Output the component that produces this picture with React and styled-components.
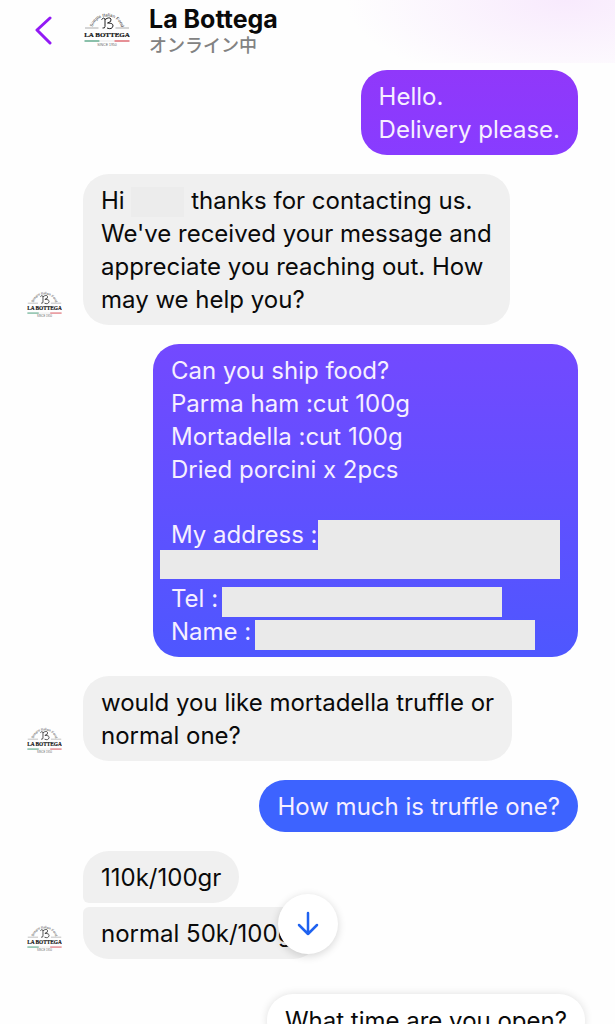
import React, { useId } from "react";
import styled, { createGlobalStyle } from "styled-components";

const GlobalStyle = createGlobalStyle`
  *, *::before, *::after { box-sizing: border-box; }
  body {
    margin: 0;
    background: #fefefe;
    color: #0a0a0a;
    font-family: Inter, "Noto Sans CJK JP", sans-serif;
  }
  button { font: inherit; color: inherit; border: 0; cursor: pointer; }
`;

const Screen = styled.div`
  position: relative;
  display: flex;
  flex-direction: column;
  height: 100vh;
  overflow: hidden;
`;

const Header = styled.header`
  display: flex;
  flex-shrink: 0;
  align-items: flex-start;
  height: 63px;
  padding: 5px 28px 0;
  background: radial-gradient(ellipse 220px 90px at 92% 0, #f8eafd, #fefefe);
`;

const BackButton = styled.button`
  display: flex;
  align-items: center;
  justify-content: center;
  width: 30px;
  height: 50px;
  margin-right: 26px;
  padding: 0;
  background: none;
`;

const HeaderLogo = styled.div`
  width: 46px;
  margin: 7px 19px 0 0;
`;

const Title = styled.h1`
  margin: 0;
  font-size: 25px;
  line-height: 29px;
  font-weight: 700;
`;

const Status = styled.p`
  margin: 0;
  color: #828282;
  font-size: 18px;
  font-weight: 500;
  line-height: 24px;
`;

const Thread = styled.main`
  display: flex;
  flex: 1;
  flex-direction: column;
  gap: 19px;
  min-height: 0;
  padding: 7px 37px 0 27px;
`;

const Row = styled.div`
  display: flex;
  flex-shrink: 0;
  align-items: flex-end;
  justify-content: ${(p) => (p.$sent ? "flex-end" : "flex-start")};
  gap: 21px;
`;

const Avatar = styled.div`
  width: 35px;
  margin-bottom: 7px;
`;

const Stack = styled.div`
  display: flex;
  flex-direction: column;
  align-items: flex-start;
  gap: 4px;
`;

const corners = {
  single: "26px",
  first: "26px 26px 26px 6px",
  last: "6px 26px 26px 26px",
};

const Bubble = styled.div`
  padding: 10px 18px 9px;
  border-radius: ${(p) => corners[p.$place || "single"]};
  background: ${(p) => p.$fill || "#f0f0f0"};
  color: ${(p) => (p.$fill ? "#f6efff" : "#0a0a0a")};
  font-size: 24px;
  line-height: 33px;
  white-space: pre-line;
`;

const OrderBubble = styled(Bubble)`
  width: 425px;
  max-width: 100%;
`;

const NameMask = styled.span`
  display: inline-block;
  width: 53px;
  height: 30px;
  background: #ececec;
  vertical-align: middle;
`;

const Details = styled.div`
  margin-top: 32px;
`;

const DetailRow = styled.div`
  display: flex;
  height: 33px;
  gap: 4px;
`;

const Mask = styled.span`
  width: 280px;
  height: 30px;
  margin-top: 5px;
  background: #eaeaea;
`;

const Address = styled.div`
  display: flex;
  flex-direction: column;
  height: 64px;
`;

const AddressLine = styled.div`
  display: flex;
  height: 32px;
`;

const AddressMask = styled.span`
  flex: 1;
  height: 30px;
  margin-top: 2px;
  background: #eaeaea;
`;

const AddressRest = styled.div`
  height: 29px;
  margin-left: -11px;
  background: #eaeaea;
`;

const Suggestion = styled.button`
  flex-shrink: 0;
  align-self: flex-end;
  margin: 16px -7px 0 0;
  padding: 10px 18px;
  border-radius: 26px;
  background: #fff;
  box-shadow: 0 0 8px rgba(0, 0, 0, 0.12);
  font-size: 24px;
  line-height: 33px;
`;

const ScrollButton = styled.button`
  position: absolute;
  bottom: 70px;
  left: 50%;
  display: flex;
  align-items: center;
  justify-content: center;
  width: 60px;
  height: 60px;
  margin-left: -30px;
  padding: 0;
  border-radius: 50%;
  background: #fff;
  box-shadow: 0 2px 8px rgba(0, 0, 0, 0.16);
`;

const LogoSvg = styled.svg`
  display: block;
  width: 100%;
  height: auto;
`;

function Logo() {
  const arc = useId();
  return (
    <LogoSvg viewBox="0 0 92 72" role="img" aria-label="La Bottega">
      <path id={arc} d="M17 31 A30 30 0 0 1 75 31" fill="none" />
      <text fontFamily="Liberation Sans" fontSize="9" fill="#333" textAnchor="middle">
        <textPath href={`#${arc}`} startOffset="50%">Simple Italian Food</textPath>
      </text>
      <path
        d="M35 15 q4 -5 7 -1 v15 q0 4 -5 3 M42 15 q9 -6 12 -1 q2 6 -7 8 q12 0 11 6 q-2 8 -12 4"
        fill="none"
        stroke="#222"
        strokeWidth="2"
      />
      <path d="M2 32 H29 M63 32 H90" stroke="#777" strokeWidth="1.200" />
      <text x="46" y="50" fontFamily="Liberation Serif" fontWeight="700" fontSize="14" fill="#111" stroke="#111" strokeWidth="0.400" textAnchor="middle">
        LA BOTTEGA
      </text>
      <path d="M1 58 H31" stroke="#4b9e7c" strokeWidth="2.600" />
      <path d="M31 58 H61" stroke="#e4e4e4" strokeWidth="1.500" />
      <path d="M61 58 H91" stroke="#d9545e" strokeWidth="2.600" />
      <text x="46" y="68" fontFamily="Liberation Sans" fontSize="7" fill="#666" textAnchor="middle">
        SINCE 1950
      </text>
    </LogoSvg>
  );
}

function Received({ children }) {
  return (
    <Row>
      <Avatar><Logo /></Avatar>
      <Stack>{children}</Stack>
    </Row>
  );
}

export default function App() {
  return (
    <Screen>
      <GlobalStyle />
      <Header>
        <BackButton aria-label="Back">
          <svg width="20" height="30" viewBox="0 0 20 30" fill="none" stroke="#9219f5" strokeWidth="3" strokeLinecap="round" strokeLinejoin="round">
            <path d="M17 3 L4 15 L17 28" />
          </svg>
        </BackButton>
        <HeaderLogo><Logo /></HeaderLogo>
        <div>
          <Title>La Bottega</Title>
          <Status>オンライン中</Status>
        </div>
      </Header>

      <Thread>
        <Row $sent>
          <Bubble $fill="linear-gradient(#9038fa, #883cff)">{"Hello.\nDelivery please."}</Bubble>
        </Row>

        <Received>
          <Bubble>
            Hi <NameMask />{" thanks for contacting us.\nWe've received your message and\nappreciate you reaching out. How\nmay we help you?"}
          </Bubble>
        </Received>

        <Row $sent>
          <OrderBubble $fill="linear-gradient(#7349ff, #4e57ff)">
            {"Can you ship food?\nParma ham :cut 100g\nMortadella :cut 100g\nDried porcini x 2pcs"}
            <Details>
              <Address>
                <AddressLine>My address :<AddressMask /></AddressLine>
                <AddressRest />
              </Address>
              <DetailRow>Tel :<Mask /></DetailRow>
              <DetailRow>Name :<Mask /></DetailRow>
            </Details>
          </OrderBubble>
        </Row>

        <Received>
          <Bubble>{"would you like mortadella truffle or\nnormal one?"}</Bubble>
        </Received>

        <Row $sent>
          <Bubble $fill="#3d63ff">How much is truffle one?</Bubble>
        </Row>

        <Received>
          <Bubble $place="first">110k/100gr</Bubble>
          <Bubble $place="last">normal 50k/100gr</Bubble>
        </Received>

        <Suggestion>What time are you open?</Suggestion>
      </Thread>

      <ScrollButton aria-label="Scroll to latest">
        <svg width="24" height="26" viewBox="0 0 24 26" fill="none" stroke="#1f62f0" strokeWidth="2.500" strokeLinecap="round" strokeLinejoin="round">
          <path d="M12 2 V23 M3 14 L12 23 L21 14" />
        </svg>
      </ScrollButton>
    </Screen>
  );
}
